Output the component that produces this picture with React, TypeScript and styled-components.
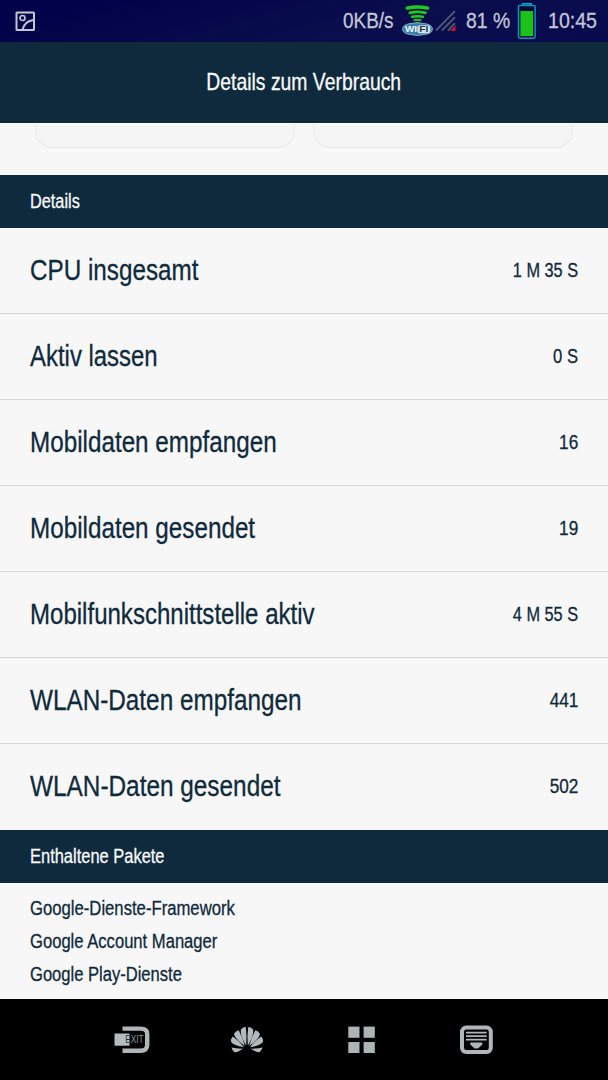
import React from "react";
import styled, { createGlobalStyle } from "styled-components";

const Global = createGlobalStyle`
  * { box-sizing: border-box; }
  body { margin: 0; background: #f7f7f7; }
`;

const Screen = styled.div`
  width: 608px;
  height: 1080px;
  display: flex;
  flex-direction: column;
  overflow: hidden;
  background: #f7f7f7;
  color: #0f2a3c;
  font-family: "Liberation Sans", Arial, sans-serif;
`;

const StatusBar = styled.header`
  height: 42px;
  flex: none;
  display: flex;
  align-items: center;
  padding: 0 11px 0 15px;
  background: linear-gradient(165deg, #02024a 15%, #0a0e4c 60%, #080a4e);
  color: #c3c6d6;
`;

const StatusGroup = styled.div`
  display: flex;
  align-items: center;
  margin-left: auto;
  height: 42px;
`;

/* Condensed text: glyphs are narrowed horizontally from the anchored side. */
const Label = styled.span<{ $size: number; $scale: number; $anchor?: "left" | "center" | "right" }>`
  display: block;
  font-size: ${(p) => p.$size}px;
  line-height: 1.2;
  white-space: nowrap;
  transform: scaleX(${(p) => p.$scale});
  transform-origin: ${(p) => p.$anchor ?? "left"} center;
  -webkit-text-stroke: 0.3px currentColor;
`;

const StatusSlot = styled.div<{ $width: number; $gap: number }>`
  width: ${(p) => p.$width}px;
  margin-right: ${(p) => p.$gap}px;
  display: flex;
  justify-content: flex-start;
  align-items: center;
`;

const TitleBar = styled.div`
  height: 81px;
  flex: none;
  display: flex;
  align-items: center;
  justify-content: center;
  background: #0f2a3c;
  color: #f7f9fa;
`;

const CardStrip = styled.div`
  height: 52px;
  flex: none;
  display: flex;
  gap: 18px;
  padding: 0 35px;
  border-top: 1px solid #fff;
`;

const CardEdge = styled.div`
  flex: 1;
  height: 24px;
  border: 1px solid #e9e9e9;
  border-top: none;
  border-radius: 0 0 17px 17px;
  background: #f5f5f5;
`;

const SectionBar = styled.div`
  height: 53px;
  flex: none;
  display: flex;
  align-items: center;
  padding: 0 30px 2px;
  background: #0f2a3c;
  color: #f7f9fa;
`;

const Row = styled.div<{ $last: boolean }>`
  height: 86px;
  flex: none;
  display: flex;
  align-items: center;
  justify-content: space-between;
  padding: 0 30px;
  border-bottom: 1px solid ${(p) => (p.$last ? "#f7f7f7" : "#d5d6d7")};
`;

const RowValue = styled.div`
  padding-bottom: 2px;
`;

const PackageList = styled.div`
  height: 116px;
  flex: none;
  padding: 8px 30px 0;
`;

const PackageRow = styled.div`
  height: 33px;
  display: flex;
  align-items: center;
`;

const NavBar = styled.nav`
  height: 81px;
  flex: none;
  display: flex;
  align-items: center;
  justify-content: center;
  background: #000;
`;

const NavItem = styled.div`
  width: 115px;
  display: flex;
  justify-content: center;
`;

const PictureIcon = () => (
  <svg width="20" height="20" viewBox="0 0 20 20" fill="none" stroke="#c3c6cf" strokeWidth="2">
    <rect x="1.5" y="1.5" width="17.5" height="17.5" rx="0.6" />
    <circle cx="7.5" cy="7" r="2.5" strokeWidth="1.7" />
    <path d="M7.5 18.5C9 13 12.5 9.7 18.5 9" />
  </svg>
);

const WifiIcon = () => (
  <svg width="31" height="32" viewBox="0 0 31 32">
    <g fill="none" stroke="#1dcb20" strokeLinecap="round">
      <path d="M5.2 3.1Q15.3 1 25.6 3.1" strokeWidth="3.4" />
      <path d="M7.8 7.8Q15.5 6.1 23.4 7.8" strokeWidth="2.8" />
      <path d="M10.2 11.8Q15.5 10.5 20.8 11.8" strokeWidth="2.5" />
      <path d="M12.4 15.2Q15.5 14.5 18.6 15.2" strokeWidth="2" />
      <path d="M14.5 17.8h2" strokeWidth="1.4" />
    </g>
    <path d="M7 18.8Q15.5 16.6 24 18.8Q30.4 20 30.4 24.2Q30.4 28.4 23 29.4Q15 31.6 8 29.4Q.6 28.4 .6 24.2Q.6 20 7 18.8Z" fill="#397fac" stroke="#88a4b5" />
    <rect x="15.3" y="20.2" width="13" height="8" rx="2.8" fill="#d4e0e8" />
    <text x="3" y="27.4" fontSize="9" fontWeight="700" fontFamily="Liberation Sans" fill="#eff6fb" textLength="12" lengthAdjust="spacingAndGlyphs">WI</text>
    <text x="17.3" y="27.1" fontSize="8.3" fontWeight="700" fontFamily="Liberation Sans" fill="#20394d" textLength="9" lengthAdjust="spacingAndGlyphs">FI</text>
  </svg>
);

const SignalIcon = () => (
  <svg width="21" height="22" viewBox="0 0 21 22">
    <path d="M1 20.5L20 1M7 20.5L20 7.2M13 20.5L20 13.2" stroke="#4b5274" strokeWidth="2" fill="none" />
    <path d="M20.5 15.5V21H15Z" fill="#d5102a" />
  </svg>
);

const BatteryIcon = () => (
  <svg width="20" height="38" viewBox="0 0 20 38">
    <rect x="5.5" y="1.5" width="9" height="2.5" fill="#087b9e" stroke="#0aa0be" />
    <rect x="1.5" y="3.4" width="16.6" height="32.8" rx="1.4" fill="#04083c" stroke="#0898b8" strokeWidth="1.5" />
    <rect x="3.4" y="9" width="12.6" height="25" fill="#19c317" />
  </svg>
);

const ExitIcon = () => (
  <svg width="38" height="30" viewBox="0 0 38 30">
    <path d="M9.5 3.6H27.5Q34.2 3.6 34.2 9V20Q34.2 25.7 27.5 25.7H9.5" fill="none" stroke="#aeb6b9" strokeWidth="4.4" />
    <rect x="1.5" y="8.5" width="15" height="12.2" fill="#b5bcbf" />
    <text x="12.2" y="18.2" fontSize="10" fontFamily="Liberation Sans" fill="#929c9f" textLength="18.3" lengthAdjust="spacingAndGlyphs">
      <tspan fill="#26343b">E</tspan>XIT
    </text>
  </svg>
);

const FlowerIcon = () => (
  <svg width="34" height="28" viewBox="0 0 34 28" fill="#b2babd">
    <path d="M16.2 19.5C12.2 13.5 9.8 6 11.2 3.2Q12.8 1 15.8 1Q17 9.5 16.2 19.5Z" />
    <path d="M14.8 20C8.5 15.5 3.5 10 4.2 7.4Q5.8 5 8.7 4.2Q12.5 11 14.8 20Z" />
    <path d="M14 21.2C7 20.2 1.5 17.8 1 15.2Q.7 12.5 2.8 10.4Q9 14.5 14 21.2Z" />
    <path d="M13.5 22.6C10 24.5 6.7 27 4.6 26.2Q2.3 25 1.5 21.5Q6.5 22.8 13.5 22.6Z" />
    <path d="M17.8 19.5C21.8 13.5 24.2 6 22.8 3.2Q21.2 1 18.2 1Q17 9.5 17.8 19.5Z" />
    <path d="M19.2 20C25.5 15.5 30.5 10 29.8 7.4Q28.2 5 25.3 4.2Q21.5 11 19.2 20Z" />
    <path d="M20 21.2C27 20.2 32.5 17.8 33 15.2Q33.3 12.5 31.2 10.4Q25 14.5 20 21.2Z" />
    <path d="M20.5 22.6C24 24.5 27.3 27 29.4 26.2Q31.7 25 32.5 21.5Q27.5 22.8 20.5 22.6Z" />
  </svg>
);

const GridIcon = () => (
  <svg width="28" height="28" viewBox="0 0 28 28" fill="#adb4b5">
    <rect x="0.3" y="0.6" width="11.2" height="11.2" />
    <rect x="15.6" y="0.6" width="11.2" height="11.2" />
    <rect x="0.3" y="16" width="11.2" height="11" />
    <rect x="15.6" y="16" width="11.2" height="11" />
  </svg>
);

const DrawerIcon = () => (
  <svg width="34" height="30" viewBox="0 0 34 30">
    <rect x="2" y="2.6" width="28.8" height="24.4" rx="4.2" fill="none" stroke="#b0b7ba" strokeWidth="4" />
    <path d="M6 7.7h20.6M6 11.2h20.6M6 14.7h20.6" stroke="#b0b7ba" strokeWidth="1.7" />
    <path d="M10.3 17.4H22.3V19.4L18 23.6H14.6L10.3 19.4Z" fill="#b0b7ba" />
  </svg>
);

const details = [
  { name: "CPU insgesamt", scale: 0.836, value: "1 M 35 S", valueScale: 0.815 },
  { name: "Aktiv lassen", scale: 0.825, value: "0 S", valueScale: 0.83 },
  { name: "Mobildaten empfangen", scale: 0.836, value: "16", valueScale: 0.86 },
  { name: "Mobildaten gesendet", scale: 0.836, value: "19", valueScale: 0.86 },
  { name: "Mobilfunkschnittstelle aktiv", scale: 0.829, value: "4 M 55 S", valueScale: 0.815 },
  { name: "WLAN-Daten empfangen", scale: 0.838, value: "441", valueScale: 0.86 },
  { name: "WLAN-Daten gesendet", scale: 0.84, value: "502", valueScale: 0.86 },
];

const packages = [
  { name: "Google-Dienste-Framework", scale: 0.834 },
  { name: "Google Account Manager", scale: 0.83 },
  { name: "Google Play-Dienste", scale: 0.828 },
];

export default function App() {
  return (
    <Screen>
      <Global />
      <StatusBar>
        <PictureIcon />
        <StatusGroup>
          <StatusSlot $width={50} $gap={9}><Label $size={22} $scale={0.86}>0KB/s</Label></StatusSlot>
          <StatusSlot $width={31} $gap={2}><WifiIcon /></StatusSlot>
          <StatusSlot $width={21} $gap={10}><SignalIcon /></StatusSlot>
          <StatusSlot $width={44} $gap={7}><Label $size={22} $scale={0.88}>81 %</Label></StatusSlot>
          <StatusSlot $width={20} $gap={11}><BatteryIcon /></StatusSlot>
          <StatusSlot $width={49} $gap={0}><Label $size={22} $scale={0.89}>10:45</Label></StatusSlot>
        </StatusGroup>
      </StatusBar>
      <TitleBar><Label $size={24} $scale={0.807} $anchor="center">Details zum Verbrauch</Label></TitleBar>
      <CardStrip>
        <CardEdge />
        <CardEdge />
      </CardStrip>
      <SectionBar><Label $size={20} $scale={0.815}>Details</Label></SectionBar>
      {details.map((d, i) => (
        <Row key={d.name} $last={i === details.length - 1}>
          <Label $size={29} $scale={d.scale}>{d.name}</Label>
          <RowValue><Label $size={20} $scale={d.valueScale} $anchor="right">{d.value}</Label></RowValue>
        </Row>
      ))}
      <SectionBar><Label $size={20} $scale={0.823}>Enthaltene Pakete</Label></SectionBar>
      <PackageList>
        {packages.map((p) => (
          <PackageRow key={p.name}><Label $size={20} $scale={p.scale}>{p.name}</Label></PackageRow>
        ))}
      </PackageList>
      <NavBar>
        <NavItem><ExitIcon /></NavItem>
        <NavItem><FlowerIcon /></NavItem>
        <NavItem><GridIcon /></NavItem>
        <NavItem><DrawerIcon /></NavItem>
      </NavBar>
    </Screen>
  );
}
